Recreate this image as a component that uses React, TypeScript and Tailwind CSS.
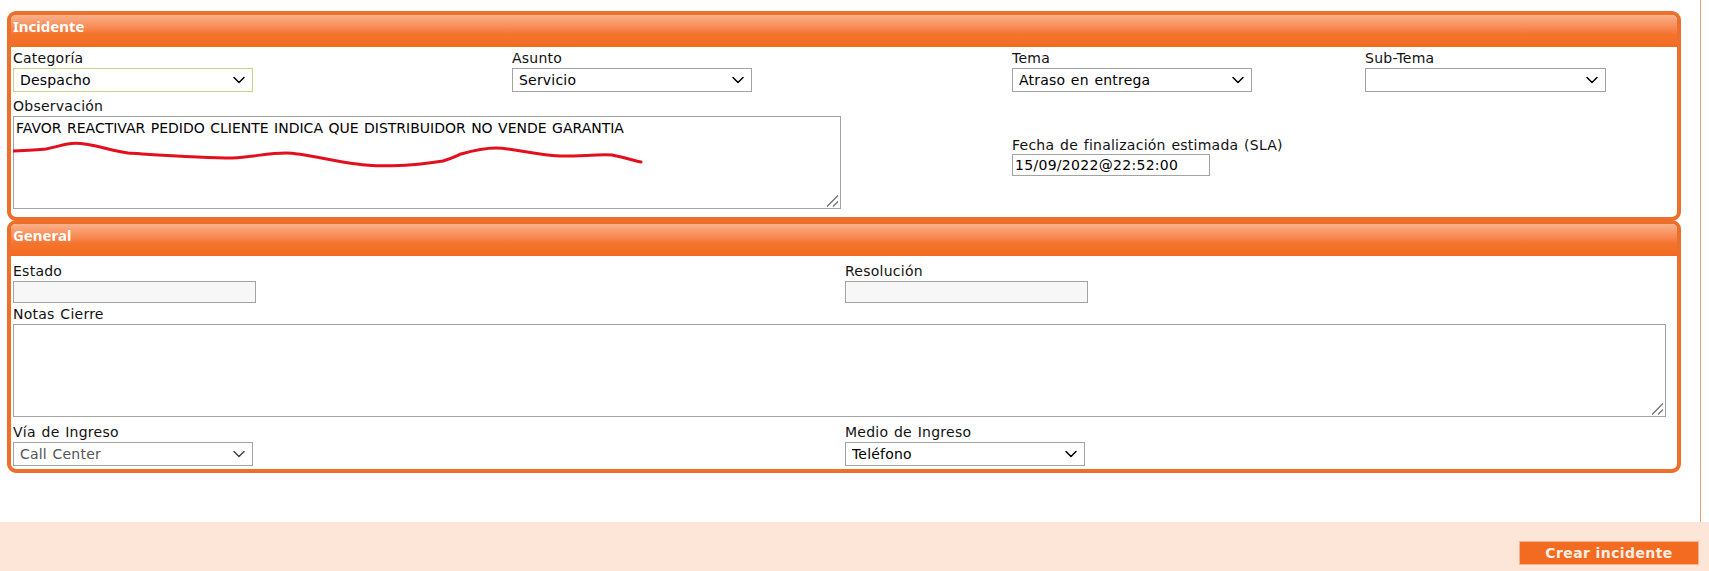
import { ChevronDown } from "lucide-react";

const font = { fontFamily: '"DejaVu Sans", Verdana, sans-serif' };

const labelClass = "block h-[16px] text-[14px] leading-[16px] tracking-[0.25px] [word-spacing:1px] text-[#111]";
const fieldClass = "block h-[24px] appearance-none border border-[#a3a3a3] bg-white text-[14px] tracking-[0.2px] [word-spacing:1px]";

function Field({ label, value, width, muted, border }: { label: string; value: string; width: string; muted?: boolean; border?: string }) {
  return (
    <div>
      <label className={labelClass}>{label}</label>
      <div className={`relative mt-[2px] ${width}`}>
        <select
          defaultValue={value}
          disabled={muted}
          className={`${fieldClass} ${width} ${border ?? ""} ${muted ? "text-[#555]" : "text-black"} pl-[6px] opacity-100`}
        >
          <option>{value}</option>
        </select>
        <ChevronDown
          className={`pointer-events-none absolute right-[4px] top-[2px] h-[20px] w-[20px] ${muted ? "text-[#444]" : "text-black"}`}
          strokeWidth={1.8}
        />
      </div>
    </div>
  );
}

function ReadOnly({ label, width }: { label: string; width: string }) {
  return (
    <div>
      <label className={labelClass}>{label}</label>
      <input disabled className={`mt-[2px] block h-[22px] ${width} border border-[#a3a3a3] bg-[#f7f7f7]`} />
    </div>
  );
}

function Grip() {
  return (
    <svg className="pointer-events-none absolute bottom-[2px] right-[2px]" width="13" height="12" viewBox="0 0 13 12" fill="none" stroke="#666" strokeWidth="1.1">
      <path d="M1 11.5 L12 0.5" />
      <path d="M7 11.5 L12 6.5" />
    </svg>
  );
}

function Panel({ title, className, children }: { title: string; className: string; children: React.ReactNode }) {
  return (
    <section className={`overflow-hidden rounded-[9px] border-[4px] border-[#ec6f2b] bg-white ${className}`}>
      <h2 className="h-[32px] bg-gradient-to-b from-[#fbb08a] via-[#f4742c] via-60% to-[#f36b21] pl-[2px] pt-[3px] font-['Noto_Sans'] text-[15px] font-bold leading-[16px] text-white">
        {title}
      </h2>
      <div className="px-[2px]">{children}</div>
    </section>
  );
}

export default function App() {
  return (
    <div className="flex h-[571px] w-[1709px] flex-col overflow-hidden bg-white" style={font}>
      <main className="h-[522px] w-[1701px] border-r border-[#ee9f73] pl-[7px] pt-[11px]">
        <div className="w-[1674px]">
          <Panel title="Incidente" className="h-[210px]">
            <div className="grid grid-cols-[499px_500px_353px_1fr] pt-[3px]">
              <Field label="Categoría" value="Despacho" width="w-[240px]" border="border-[#c4d48a]" />
              <Field label="Asunto" value="Servicio" width="w-[240px]" />
              <Field label="Tema" value="Atraso en entrega" width="w-[240px]" />
              <Field label="Sub-Tema" value="" width="w-[241px]" />
            </div>
            <div className="grid grid-cols-[999px_1fr] pt-[6px]">
              <div>
                <label className={labelClass}>Observación</label>
                <div className="relative mt-[2px] w-[828px]">
                  <textarea
                    readOnly
                    className="block h-[93px] w-[828px] resize-none border border-[#a3a3a3] px-[2px] pt-[3px] text-[14px] leading-[16px] tracking-[0px] [word-spacing:1px] text-black"
                    defaultValue="FAVOR REACTIVAR PEDIDO CLIENTE INDICA QUE DISTRIBUIDOR NO VENDE GARANTIA"
                  />
                  <svg className="pointer-events-none absolute left-0 top-[1px]" width="640" height="60" viewBox="0 0 640 60" fill="none">
                    <path
                      d="M0 34 C12 33.5 24 33 33 32 C44 30 52 26.5 62 26.3 C78 26 95 33 115 36 C140 37.5 190 41 219 41 C240 40 255 36 273 36 C290 36 318 44 344 47 C358 49.5 395 50 430 44 C440 41 445 38 448 37 C462 33 472 31 483 31 C500 31 520 38 547 39 C565 39.5 585 37 599 38 C610 40 618 43 628 45"
                      stroke="#e30f1d"
                      strokeWidth="3"
                      strokeLinecap="round"
                    />
                  </svg>
                  <Grip />
                </div>
              </div>
              <div className="pt-[39px]">
                <label className={labelClass}>Fecha de finalización estimada (SLA)</label>
                <input
                  readOnly
                  value="15/09/2022@22:52:00"
                  className="mt-[1px] block h-[22px] w-[198px] border border-[#a3a3a3] px-[2px] text-[14px] tracking-[0.3px] text-black"
                />
              </div>
            </div>
          </Panel>
          <Panel title="General" className="-mt-px h-[253px]">
            <div className="grid grid-cols-[832px_1fr] pt-[7px]">
              <ReadOnly label="Estado" width="w-[243px]" />
              <ReadOnly label="Resolución" width="w-[243px]" />
            </div>
            <label className={`${labelClass} mt-[3px]`}>Notas Cierre</label>
            <div className="relative mt-[2px] w-[1653px]">
              <textarea readOnly className="block h-[93px] w-[1653px] resize-none border border-[#a3a3a3]" />
              <Grip />
            </div>
            <div className="grid grid-cols-[832px_1fr] pt-[7px]">
              <Field label="Vía de Ingreso" value="Call Center" width="w-[240px]" muted />
              <Field label="Medio de Ingreso" value="Teléfono" width="w-[240px]" />
            </div>
          </Panel>
        </div>
      </main>
      <footer className="flex h-[49px] justify-end bg-[#fde5d8] pr-[10px] pt-[19px]">
        <button className="h-[24px] w-[180px] border border-[#f6b48f] bg-[#f36b21] text-[14px] font-bold tracking-[0.4px] text-[#fdeee5]">
          Crear incidente
        </button>
      </footer>
    </div>
  );
}
